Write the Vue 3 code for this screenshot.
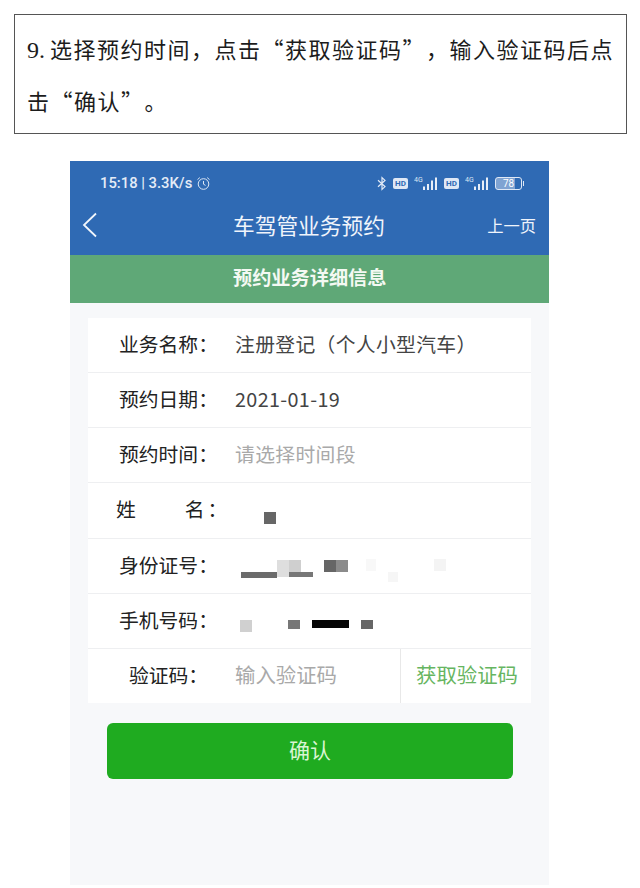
<script setup>
const rows = [
  { label: '业务名称：', value: '注册登记（个人小型汽车）' },
  { label: '预约日期：', value: '2021-01-19' },
  { label: '预约时间：', value: '请选择时间段', muted: true },
  {
    label: '姓　　名：',
    wide: true,
    blots: [{ w: 12, h: 12, x: 176, y: 7, c: '#666' }],
  },
  {
    label: '身份证号：',
    blots: [
      { w: 36, h: 6, x: 153, y: 12, c: '#6b6b6b' },
      { w: 12, h: 17, x: 189, y: 0, c: '#dedede' },
      { w: 12, h: 17, x: 201, y: 0, c: '#cfcfcf' },
      { w: 24, h: 5, x: 201, y: 12, c: '#777' },
      { w: 12, h: 12, x: 236, y: 0, c: '#666' },
      { w: 12, h: 12, x: 248, y: 0, c: '#8b8b8b' },
      { w: 10, h: 12, x: 278, y: -1, c: '#f8f8f8' },
      { w: 10, h: 10, x: 300, y: 12, c: '#f6f6f6' },
      { w: 12, h: 12, x: 346, y: -1, c: '#f4f4f4' },
    ],
  },
  {
    label: '手机号码：',
    blots: [
      { w: 12, h: 12, x: 152, y: 5, c: '#d0d0d0' },
      { w: 12, h: 9, x: 200, y: 5, c: '#777' },
      { w: 37, h: 8, x: 224, y: 5, c: '#050505' },
      { w: 12, h: 9, x: 273, y: 5, c: '#666' },
    ],
  },
];
</script>

<template>
  <div class="page">
    <div class="note">
      <span class="num">9.</span>选择预约时间，点击“获取验证码”，输入验证码后点击“确认”。
    </div>

    <div class="phone">
      <div class="top">
        <div class="status">
          <div class="status-left">
            <span>15:18 | 3.3K/s</span>
            <svg width="15" height="15" viewBox="0 0 15 15" fill="none" stroke="#dbe6f5" stroke-width="1">
              <circle cx="7.5" cy="8" r="5.3" />
              <path d="M7.5 5v3.2l2 1.2M1.5 3.6 3.8 1.6M13.5 3.6 11.2 1.6" />
            </svg>
          </div>
          <div class="status-right">
            <svg width="10" height="15" viewBox="0 0 10 15" fill="none" stroke="#e3ebf7" stroke-width="1.2">
              <path d="M1 4.2 8 10.6 5 13.4V1.6L8 4.4 1 10.8" />
            </svg>
            <span class="hd">HD</span>
            <svg width="24" height="15" viewBox="0 0 24 15">
              <text x="0" y="6" font-size="7" font-family="Roboto, sans-serif" fill="#dbe6f5">4G</text>
              <path d="M9 10.5h2V14H9zM13 8h2v6h-2zM17 4.5h2V14h-2zM21 1.5h2V14h-2z" fill="#e8eef8" />
            </svg>
            <span class="hd">HD</span>
            <svg width="24" height="15" viewBox="0 0 24 15">
              <text x="0" y="6" font-size="7" font-family="Roboto, sans-serif" fill="#dbe6f5">4G</text>
              <path d="M9 10.5h2V14H9zM13 8h2v6h-2zM17 4.5h2V14h-2zM21 1.5h2V14h-2z" fill="#e8eef8" />
            </svg>
            <span class="battery">78</span>
          </div>
        </div>
        <div class="nav">
          <svg class="back" width="16" height="26" viewBox="0 0 16 26" fill="none" stroke="#f2f6fc" stroke-width="1.8">
            <path d="M14 1.5 2 13l12 11.5" />
          </svg>
          <span class="title">车驾管业务预约</span>
          <span class="prev">上一页</span>
        </div>
      </div>

      <div class="sub">预约业务详细信息</div>

      <div class="form">
        <div v-for="row in rows" :key="row.label" class="row" :class="{ 'row-wide': row.wide }">
          <span class="label">{{ row.label }}</span>
          <span v-if="row.value" class="value" :class="{ muted: row.muted }">{{ row.value }}</span>
          <i
            v-for="(b, i) in row.blots"
            :key="i"
            class="blot"
            :style="{ width: b.w + 'px', height: b.h + 'px', left: b.x + 'px', top: `calc(50% + ${b.y}px - 6px)`, background: b.c }"
          ></i>
        </div>
        <div class="row row-code">
          <span class="label code-label">验证码：</span>
          <span class="value muted code-input">输入验证码</span>
          <span class="get-code">获取验证码</span>
        </div>
      </div>

      <button class="confirm" type="button">确认</button>
    </div>
  </div>
</template>

<style>
html,
body {
  margin: 0;
  background: #fff;
}
</style>

<style scoped>
.page {
  width: 640px;
  height: 888px;
  padding-top: 14px;
  box-sizing: border-box;
  overflow: hidden;
  font-family: "Noto Sans CJK SC", "Noto Sans", sans-serif;
  color: #222;
  text-spacing-trim: space-all;
  font-kerning: none;
}

.note {
  box-sizing: border-box;
  width: 613px;
  height: 120px;
  margin-left: 14px;
  padding: 8px 6px 0 12px;
  border: 1px solid #555;
  font-size: 22px;
  line-height: 50px;
  letter-spacing: 1.5px;
  color: #1c1c1c;
}

.num {
  font-family: "Liberation Serif", serif;
  font-size: 24px;
  letter-spacing: 0;
  margin-right: 5px;
}

.phone {
  width: 479px;
  height: 724px;
  margin: 27px 0 0 70px;
  background: #f7f8fa;
  display: flex;
  flex-direction: column;
}

.top {
  height: 94px;
  background: #2f6ab4;
  color: #f0f4fb;
}

.status {
  height: 44px;
  padding: 0 25px 0 30px;
  display: flex;
  align-items: center;
  justify-content: space-between;
}

.status-left {
  display: flex;
  align-items: center;
  gap: 4px;
  font-family: Roboto, sans-serif;
  font-size: 14.8px;
  font-weight: 500;
  color: #e4ecf7;
}

.status-right {
  display: flex;
  align-items: center;
  gap: 6px;
}

.hd {
  width: 15px;
  height: 11px;
  border-radius: 2px;
  background: #dfe8f5;
  color: #2f6ab4;
  font-family: Roboto, sans-serif;
  font-size: 8px;
  font-weight: 700;
  line-height: 11px;
  text-align: center;
}

.battery {
  position: relative;
  box-sizing: border-box;
  width: 27px;
  height: 13px;
  margin-right: 2px;
  border: 1px solid #dfe8f5;
  border-radius: 3px;
  background: linear-gradient(90deg, #7fa3d2 78%, transparent 78%);
  font-family: Roboto, sans-serif;
  font-size: 10px;
  line-height: 11px;
  text-align: center;
  color: #fff;
}

.battery::after {
  content: "";
  position: absolute;
  right: -3px;
  top: 3px;
  width: 1px;
  height: 5px;
  background: #dfe8f5;
}

.nav {
  position: relative;
  height: 50px;
  padding: 0 13px 10px 12px;
  box-sizing: border-box;
  display: flex;
  align-items: center;
  justify-content: space-between;
}

.title {
  position: absolute;
  left: 163px;
  top: 5px;
  font-size: 21.7px;
  line-height: 30px;
}

.prev {
  font-size: 16.3px;
}

.sub {
  height: 48px;
  background: #5fa877;
  color: #f4f9f3;
  font-size: 19.2px;
  font-weight: 700;
  line-height: 45px;
  padding-left: 163px;
}

.form {
  margin: 15px 18px 0;
  display: flex;
  flex-direction: column;
  background: #fff;
}

.row {
  position: relative;
  box-sizing: border-box;
  height: 55px;
  padding: 0 0 4px 31px;
  display: flex;
  align-items: center;
  border-bottom: 1px solid #eeeff1;
  font-size: 19.8px;
}

.row-wide {
  height: 56px;
  padding-left: 28px;
}

.label {
  width: 116px;
  flex: none;
  white-space: nowrap;
}

.row-wide .label {
  width: 119px;
  letter-spacing: 3.1px;
}

.value {
  color: #444;
  white-space: nowrap;
  letter-spacing: 0.35px;
}

.muted {
  color: #a9a9a9;
}

.blot {
  position: absolute;
}

.row-code {
  height: 54px;
  border-bottom: 0;
  padding-left: 41px;
}

.code-label {
  width: 106px;
}

.code-input {
  width: 165px;
  flex: none;
  font-size: 20.4px;
  letter-spacing: 0;
}

.get-code {
  align-self: stretch;
  flex: 1;
  margin-bottom: -4px;
  border-left: 1px solid #e8e8e8;
  padding-left: 15px;
  font-size: 20.4px;
  line-height: 50px;
  color: #66b561;
  white-space: nowrap;
}

.confirm {
  width: 406px;
  height: 56px;
  margin: 20px 0 0 37px;
  padding: 0 0 5px;
  border: 0;
  border-radius: 6px;
  background: #1fab20;
  color: #d9f5d2;
  font-family: inherit;
  font-size: 21px;
}
</style>
